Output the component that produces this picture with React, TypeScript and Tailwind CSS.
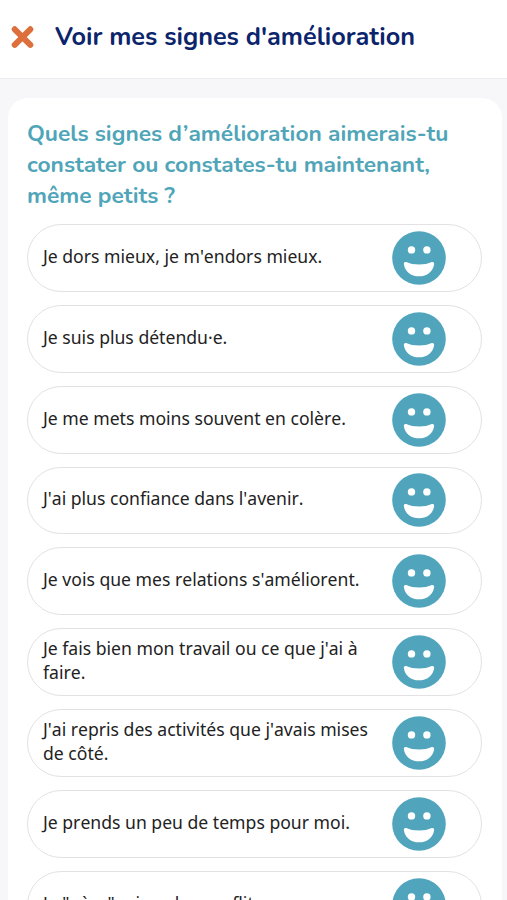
import { useState } from "react";

interface Sign {
  id: string;
  label: string;
}

const signs: Sign[] = [
  { id: "sleep", label: "Je dors mieux, je m'endors mieux." },
  { id: "relaxed", label: "Je suis plus détendu·e." },
  { id: "anger", label: "Je me mets moins souvent en colère." },
  { id: "future", label: "J'ai plus confiance dans l'avenir." },
  { id: "relations", label: "Je vois que mes relations s'améliorent." },
  { id: "work", label: "Je fais bien mon travail ou ce que j'ai à faire." },
  { id: "activities", label: "J'ai repris des activités que j'avais mises de côté." },
  { id: "time", label: "Je prends un peu de temps pour moi." },
  { id: "conflicts", label: "Je \"gère\" mieux les conflits." },
];

function CloseIcon() {
  return (
    <svg width="23" height="23" viewBox="0 0 23 23" fill="none" stroke="#dc6f3c" strokeWidth="6" strokeLinecap="round">
      <path d="M3.7 3.3 19.3 18.9M19.3 3.3 3.7 18.9" />
    </svg>
  );
}

function SmileyIcon({ active }: { active: boolean }) {
  return (
    <svg width="54" height="54" viewBox="0 0 54 54" className={active ? "text-[#50a5bd]" : "text-gray-300"}>
      <circle cx="27" cy="27" r="26.8" fill="currentColor" />
      <circle cx="19.5" cy="18.9" r="3.7" fill="white" />
      <circle cx="34.9" cy="18.9" r="3.7" fill="white" />
      <path
        d="M14.2 31.1C17.7 32.8 22 33.6 27 33.6S36.3 32.8 39.8 31.1C41.3 30.5 42.4 31.5 42.1 33.2C41 40.6 35.2 45.3 27 45.3S13 40.6 11.9 33.2C11.6 31.5 12.7 30.5 14.2 31.1Z"
        fill="white"
      />
    </svg>
  );
}

export default function App() {
  const [selected, setSelected] = useState<string[]>(signs.map((sign) => sign.id));

  const toggle = (id: string) => {
    setSelected(selected.includes(id) ? selected.filter((item) => item !== id) : [...selected, id]);
  };

  return (
    <div className="h-screen overflow-hidden flex flex-col bg-[#f7f7fa]">
      <header className="h-[79px] shrink-0 flex items-center bg-white border-b border-[#ebebee] pl-[11px] pb-1">
        <button aria-label="Fermer" className="shrink-0">
          <CloseIcon />
        </button>
        <h1 className="ml-[21px] whitespace-nowrap font-['Nunito','Lato',sans-serif] font-bold text-[25.25px] leading-8 text-[#0b246b]">
          Voir mes signes d'amélioration
        </h1>
      </header>

      <main className="mt-[19px] ml-2 mr-[5px] shrink-0 rounded-[20px] bg-white pl-[18.5px] pr-5 pt-5 pb-5">
        <h2 className="whitespace-nowrap pl-[0.5px] font-['Nunito','Lato',sans-serif] font-bold text-[22.75px] leading-[31px] text-[#50a5b8]">
          <span className="block">Quels signes d’amélioration aimerais-tu</span>
          <span className="block">constater ou constates-tu maintenant,</span>
          <span className="block">même petits ?</span>
        </h2>

        <div className="mt-[13px] flex flex-col gap-[13px]">
          {signs.map((sign) => (
            <button
              key={sign.id}
              onClick={() => toggle(sign.id)}
              className="h-[67.85px] flex items-center justify-between rounded-[34px] border-[1.5px] border-[#e2e2e4] pl-[15.5px] pr-[35.5px] text-left"
            >
              <span className="w-[331px] pb-[3.4px] font-['Noto_Sans',sans-serif] text-[17.6px] leading-[24.6px] text-[#222] [font-kerning:none]">
                {sign.label}
              </span>
              <SmileyIcon active={selected.includes(sign.id)} />
            </button>
          ))}
        </div>
      </main>
    </div>
  );
}
